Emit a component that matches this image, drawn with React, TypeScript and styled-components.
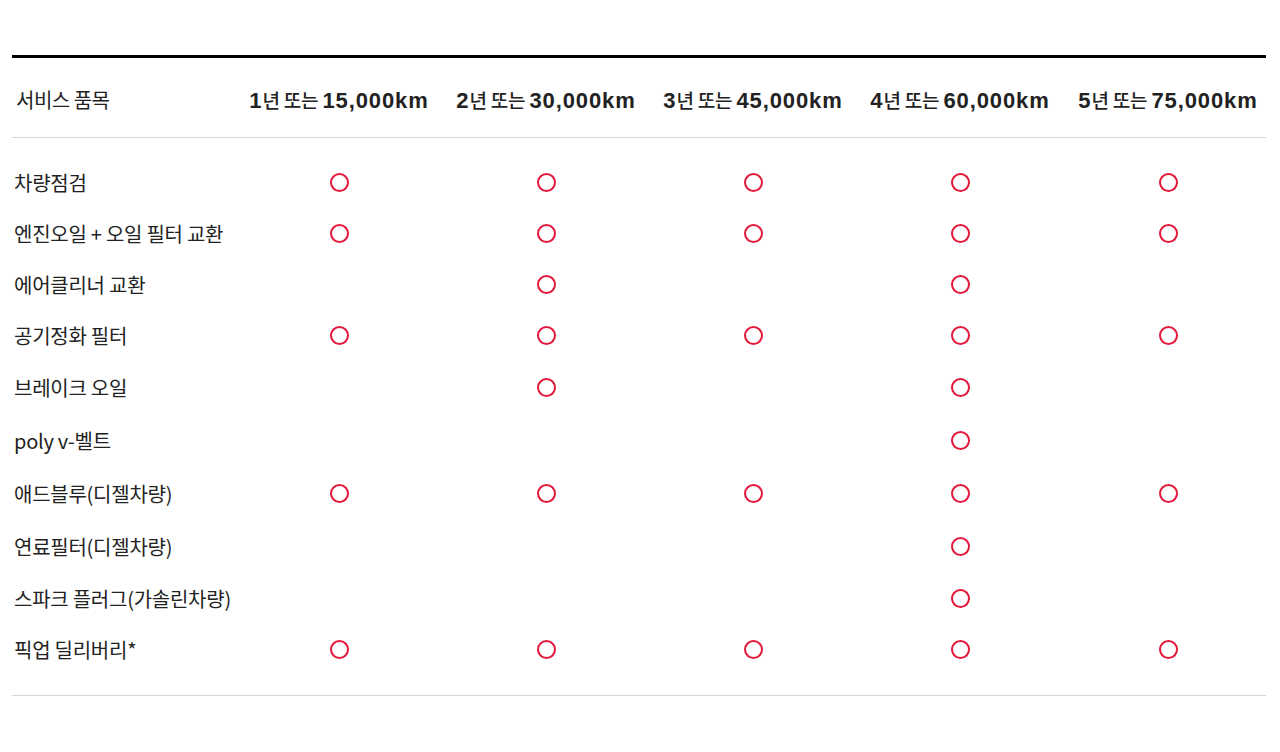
import React from "react";
import styled, { createGlobalStyle } from "styled-components";

const Global = createGlobalStyle`
  html, body { margin: 0; padding: 0; background: #fff; }
  body { font-family: "Noto Sans CJK KR", "Noto Sans", sans-serif; color: #1b1b1b; }
`;

const Page = styled.div`
  padding: 55px 14px 0 12px;
`;

const Table = styled.div`
  border-top: 3px solid #000;
  border-bottom: 1px solid #d6d6d6;
  padding-bottom: 20px;
`;

const cols = "224px 206px 208px 206px 208px 208px";

const HeaderRow = styled.div`
  box-sizing: border-box;
  display: grid;
  grid-template-columns: ${cols};
  height: 80px;
  padding-top: 4px;
  align-items: center;
  border-bottom: 1px solid #d6d6d6;
  margin-bottom: 18px;
`;

const HeadLabel = styled.div`
  font-size: 20px;
  font-weight: 400;
  padding-left: 4px;
  letter-spacing: -0.5px;
  color: #222;
`;

const HeadCell = styled.div`
  font-size: 19px;
  font-weight: 500;
  text-align: center;
  white-space: nowrap;
  letter-spacing: -0.2px;
  color: #222;
`;

const Num = styled.span`
  font-family: "Liberation Sans", Arial, sans-serif;
  font-weight: 700;
  font-size: 22px;
  letter-spacing: 0.9px;
`;

const Row = styled.div<{ $h: number }>`
  display: grid;
  grid-template-columns: ${cols};
  height: ${(p) => p.$h}px;
  align-items: center;
`;

const Label = styled.div`
  font-size: 20px;
  padding-left: 2px;
  letter-spacing: -0.25px;
  white-space: nowrap;
  color: #222;
`;

const Cell = styled.div`
  display: flex;
  justify-content: center;
  align-items: center;
`;

const Mark = styled.span`
  width: 15px;
  height: 15px;
  border: 2px solid #e3183a;
  border-radius: 50%;
  display: block;
`;

const heads = [
  ["1", "15,000km"],
  ["2", "30,000km"],
  ["3", "45,000km"],
  ["4", "60,000km"],
  ["5", "75,000km"],
];

const rows: { label: string; marks: number[]; h: number }[] = [
  { label: "차량점검", marks: [1, 1, 1, 1, 1], h: 52 },
  { label: "엔진오일 + 오일 필터 교환", marks: [1, 1, 1, 1, 1], h: 51 },
  { label: "에어클리너 교환", marks: [0, 1, 0, 1, 0], h: 51 },
  { label: "공기정화 필터", marks: [1, 1, 1, 1, 1], h: 51 },
  { label: "브레이크 오일", marks: [0, 1, 0, 1, 0], h: 52 },
  { label: "poly v-벨트", marks: [0, 0, 0, 1, 0], h: 54 },
  { label: "애드블루(디젤차량)", marks: [1, 1, 1, 1, 1], h: 53 },
  { label: "연료필터(디젤차량)", marks: [0, 0, 0, 1, 0], h: 52 },
  { label: "스파크 플러그(가솔린차량)", marks: [0, 0, 0, 1, 0], h: 52 },
  { label: "픽업 딜리버리*", marks: [1, 1, 1, 1, 1], h: 51 },
];

export default function App() {
  return (
    <>
      <Global />
      <Page>
        <Table>
          <HeaderRow>
            <HeadLabel>서비스 품목</HeadLabel>
            {heads.map(([y, km]) => (
              <HeadCell key={y}>
                <Num>{y}</Num>년 또는 <Num>{km}</Num>
              </HeadCell>
            ))}
          </HeaderRow>
          {rows.map((r) => (
            <Row key={r.label} $h={r.h}>
              <Label>{r.label}</Label>
              {r.marks.map((m, i) => (
                <Cell key={i}>{m ? <Mark /> : null}</Cell>
              ))}
            </Row>
          ))}
        </Table>
      </Page>
    </>
  );
}
